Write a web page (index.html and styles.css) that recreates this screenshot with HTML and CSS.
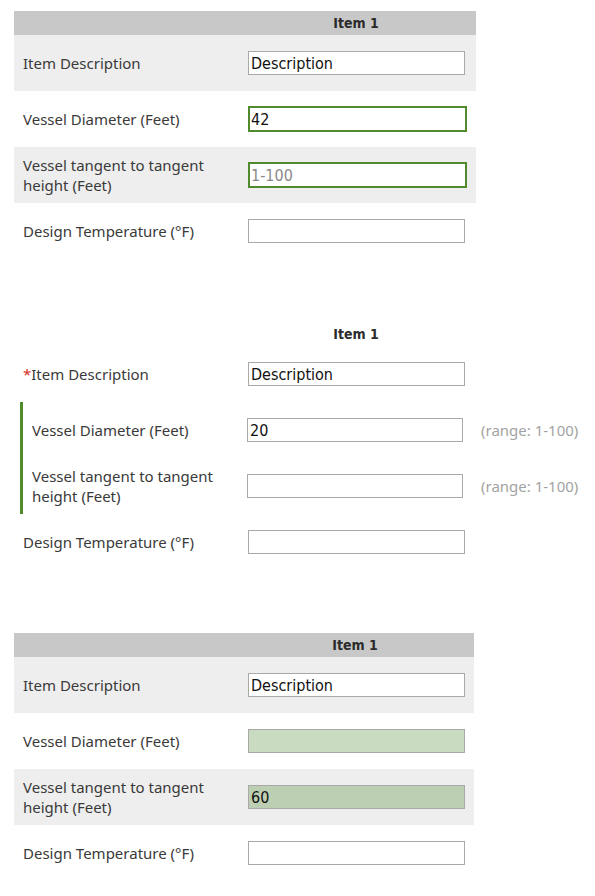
FILE: index.html
```html
<!DOCTYPE html>
<html>
<head>
<meta charset="utf-8">
<link rel="stylesheet" href="styles.css">
</head>
<body>
<div class="page">
  <section class="form striped">
    <div class="head"><div class="head-spacer"></div><div class="head-title">Item 1</div></div>
    <div class="row"><div class="label">Item Description</div><div class="value"><input class="field" value="Description"></div></div>
    <div class="row"><div class="label">Vessel Diameter (Feet)</div><div class="value"><input class="field valid" value="42"></div></div>
    <div class="row"><div class="label">Vessel tangent to tangent height (Feet)</div><div class="value"><input class="field valid" placeholder="1-100"></div></div>
    <div class="row"><div class="label">Design Temperature (°F)</div><div class="value"><input class="field"></div></div>
  </section>

  <section class="form plain">
    <div class="head"><div class="head-spacer"></div><div class="head-title">Item 1</div></div>
    <div class="row"><div class="label"><span class="req">*</span>Item Description</div><div class="value"><input class="field" value="Description"></div></div>
    <div class="group">
      <div class="row"><div class="label">Vessel Diameter (Feet)</div><div class="value"><input class="field" value="20"><span class="hint">(range: 1-100)</span></div></div>
      <div class="row"><div class="label">Vessel tangent to tangent height (Feet)</div><div class="value"><input class="field"><span class="hint">(range: 1-100)</span></div></div>
    </div>
    <div class="row"><div class="label">Design Temperature (°F)</div><div class="value"><input class="field"></div></div>
  </section>

  <section class="form striped narrow">
    <div class="head"><div class="head-spacer"></div><div class="head-title">Item 1</div></div>
    <div class="row"><div class="label">Item Description</div><div class="value"><input class="field" value="Description"></div></div>
    <div class="row"><div class="label">Vessel Diameter (Feet)</div><div class="value"><input class="field fill-light"></div></div>
    <div class="row"><div class="label">Vessel tangent to tangent height (Feet)</div><div class="value"><input class="field fill-dark" value="60"></div></div>
    <div class="row"><div class="label">Design Temperature (°F)</div><div class="value"><input class="field"></div></div>
  </section>
</div>
</body>
</html>
```
FILE: styles.css
```css
* { box-sizing: border-box; }
html, body { margin: 0; padding: 0; background: #fff; }
body { font-family: "Noto Sans", "Open Sans", sans-serif; color: #333; }
.page {
  padding: 11px 0 0 14px;
  display: flex;
  flex-direction: column;
  gap: 63px;
}
.form { width: 462px; display: flex; flex-direction: column; }
.form.narrow { width: 460px; }
.head { display: flex; height: 24px; align-items: center; }
.striped .head { background: #c8c8c8; }
.head-spacer { width: 222px; flex: none; }
.head-title {
  flex: 1;
  text-align: center;
  font-family: "DejaVu Sans Condensed", "DejaVu Sans", sans-serif;
  font-weight: bold;
  font-size: 14px;
  color: #2b2b2b;
}
.row { display: flex; align-items: center; height: 56px; }
.striped .row:nth-of-type(even) { background: #eeeeee; }
.label {
  flex: none;
  width: 222px;
  padding-left: 9px;
  padding-right: 16px;
  font-size: 15px;
  line-height: 20px;
  color: #3a3a3a;
}
.req { color: #d9302a; }
.value { display: flex; align-items: center; flex: none; }
.field {
  flex: none;
  margin: 0 0 0 12px;
  width: 217px;
  height: 24px;
  border: 1px solid #a9a9a9;
  background: #fff;
  padding: 0 2px;
  font-family: "DejaVu Sans Condensed", "DejaVu Sans", sans-serif;
  font-size: 16px;
  color: #111;
  outline: none;
}
.field::placeholder { color: #8a8a8a; }
.field.valid { width: 219px; height: 26px; border: 2px solid #4f8a2d; padding: 0 1px; }
.field.fill-light { background: #c9dcc2; }
.field.fill-dark { background: #bccfb3; }
.group {
  margin-left: 6px;
  border-left: 3px solid #4f8a2d;
  display: flex;
  flex-direction: column;
}
.group .label { width: 213px; }
.group .field { margin-left: 11px; width: 216px; }
.hint { flex: none; margin-left: 18px; font-size: 15px; color: #a3a3a3; white-space: nowrap; }
```
